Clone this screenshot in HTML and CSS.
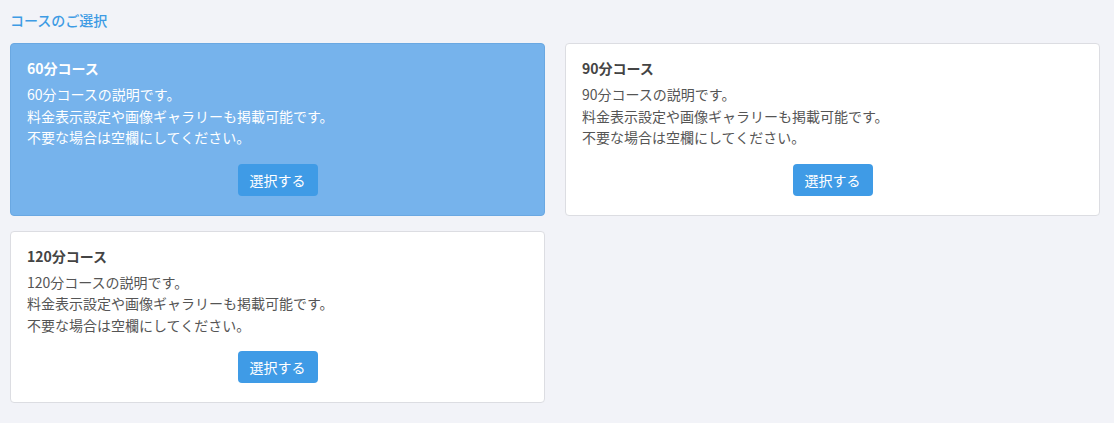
FILE: index.html
```html
<!DOCTYPE html>
<html lang="ja">
<head>
    <meta charset="utf-8">
    <title>コースのご選択</title>
    <link rel="stylesheet" href="styles.css">
</head>
<body>

    <div class="container">
        <h1 class="section-title">コースのご選択</h1>

        <!-- Course list, first item is the current selection -->
        <div class="course-list">
            <div class="course selected">
                <h2 class="course-name">60分コース</h2>
                <p class="course-desc">60分コースの説明です。<br>料金表示設定や画像ギャラリーも掲載可能です。<br>不要な場合は空欄にしてください。</p>
                <div class="course-action"><button class="select-btn">選択する</button></div>
            </div>
            <div class="course">
                <h2 class="course-name">90分コース</h2>
                <p class="course-desc">90分コースの説明です。<br>料金表示設定や画像ギャラリーも掲載可能です。<br>不要な場合は空欄にしてください。</p>
                <div class="course-action"><button class="select-btn">選択する</button></div>
            </div>
            <div class="course">
                <h2 class="course-name">120分コース</h2>
                <p class="course-desc">120分コースの説明です。<br>料金表示設定や画像ギャラリーも掲載可能です。<br>不要な場合は空欄にしてください。</p>
                <div class="course-action"><button class="select-btn">選択する</button></div>
            </div>
        </div>
    </div>

</body>
</html>
```

FILE: styles.css
```css
/* Main page styles */
body, h1, h2, p {
    margin: 0;
    padding: 0;
}

body {
    background: #f2f3f8;
    color: #555;
    font-family: "Noto Sans CJK JP", "Noto Sans", sans-serif;
    font-size: 14px;
}

.container {
    padding: 10px 15px 20px 10px;
}

.section-title {
    font-size: 14px;
    font-weight: 500;
    line-height: 20px;
    color: #3e9be4;
    margin-bottom: 13px;
}

/* Course cards */
.course-list {
    display: grid;
    grid-template-columns: 535px 535px;
    column-gap: 20px;
    row-gap: 15px;
}

.course {
    background: #fff;
    border: 1px solid #dcdde2;
    border-radius: 4px;
    padding: 13px 16px 19px 16px;
}

.course-name {
    font-size: 14px;
    font-weight: bold;
    line-height: 22px;
    color: #444;
    margin-bottom: 5px;
}

.course-desc {
    line-height: 21.5px;
}

.course-action {
    text-align: center;
    margin-top: 15px;
}

.select-btn {
    font: inherit;
    font-size: 14px;
    color: #fff;
    background: #3f9be6;
    border: 0;
    border-radius: 4px;
    width: 80px;
    height: 32px;
    padding: 0;
}

/* Selected state */
.course.selected {
    background: #76b3ec;
    border-color: #6aa8e2;
    color: #fff;
}

.course.selected .course-name {
    color: #fff;
}
```
